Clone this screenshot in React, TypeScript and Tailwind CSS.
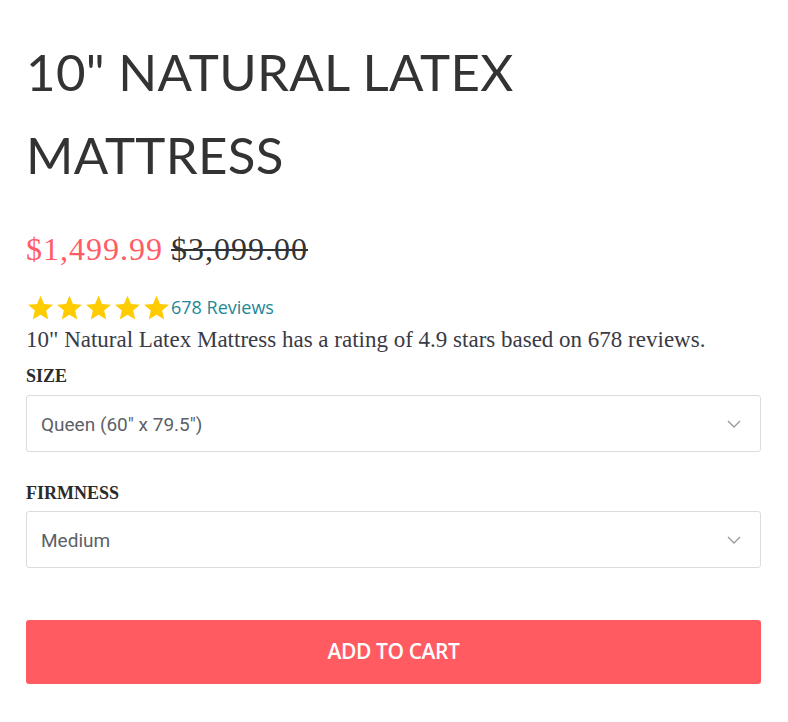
import React from 'react';

const Star = () => (
  <svg width="29" height="25" viewBox="1.5 1.5 21 20" className="shrink-0">
    <path
      d="M12 17.27L18.18 21l-1.64-7.03L22 9.24l-7.19-.61L12 2 9.19 8.63 2 9.24l5.46 4.73L5.82 21z"
      fill="#ffcc00"
    />
  </svg>
);

const Chevron = () => (
  <svg width="14" height="8" viewBox="0 0 14 8" fill="none">
    <path d="M1 1l6 6 6-6" stroke="#9a9a9a" strokeWidth="1.4" />
  </svg>
);

type SelectBoxProps = {
  value: string;
};

const SelectBox = ({ value }: SelectBoxProps) => (
  <div className="flex h-[57px] items-center justify-between rounded-[3px] border border-[#dcdcdc] bg-white pl-[14px] pr-[19px]">
    <span className="pt-[4px] font-['Roboto'] text-[19px] text-[#5d5f68]">{value}</span>
    <Chevron />
  </div>
);

const Label = ({ children }: { children: React.ReactNode }) => (
  <div className="font-['Liberation_Serif',serif] text-[18px] font-bold leading-[24px] text-[#2b2b2b]">
    {children}
  </div>
);

const App = () => {
  return (
    <div className="min-h-screen bg-white pl-[26px] pr-[27px] pt-[30px]">
      <h1 className="font-['Lato',sans-serif] text-[51px] font-normal leading-[83px] tracking-[0.3px] text-[#333333]">
        10" NATURAL LATEX
        <br />
        MATTRESS
      </h1>

      <div className="mt-[33px] flex gap-[8px] font-['Liberation_Serif',serif] text-[32px] leading-[40px] tracking-[1px]">
        <span className="text-[#ff5c66]">$1,499.99</span>
        <span className="text-[#333333] line-through decoration-2">$3,099.00</span>
      </div>

      <div className="mt-[24px] flex h-[28px] items-center">
        <div className="flex">
          <Star />
          <Star />
          <Star />
          <Star />
          <Star />
        </div>
        <span className="font-['Open_Sans',sans-serif] text-[18px] leading-[24px] text-[#1d8898]">678 Reviews</span>
      </div>

      <p className="mt-[5px] font-['Liberation_Serif',serif] text-[23px] leading-[28px] text-[#3a3a45]">
        10" Natural Latex Mattress has a rating of 4.9 stars based on 678 reviews.
      </p>

      <div className="mt-[10px]">
        <Label>SIZE</Label>
      </div>
      <div className="mt-[7px]">
        <SelectBox value={'Queen (60" x 79.5")'} />
      </div>

      <div className="mt-[29px]">
        <Label>FIRMNESS</Label>
      </div>
      <div className="mt-[6px]">
        <SelectBox value="Medium" />
      </div>

      <button
        type="button"
        className="mt-[52px] flex h-[64px] w-full items-center justify-center rounded-[3px] bg-[#ff5b61] font-['Open_Sans',sans-serif] text-[21px] font-semibold tracking-[-0.4px] text-white"
      >
        ADD TO CART
      </button>
    </div>
  );
};

export default App;
